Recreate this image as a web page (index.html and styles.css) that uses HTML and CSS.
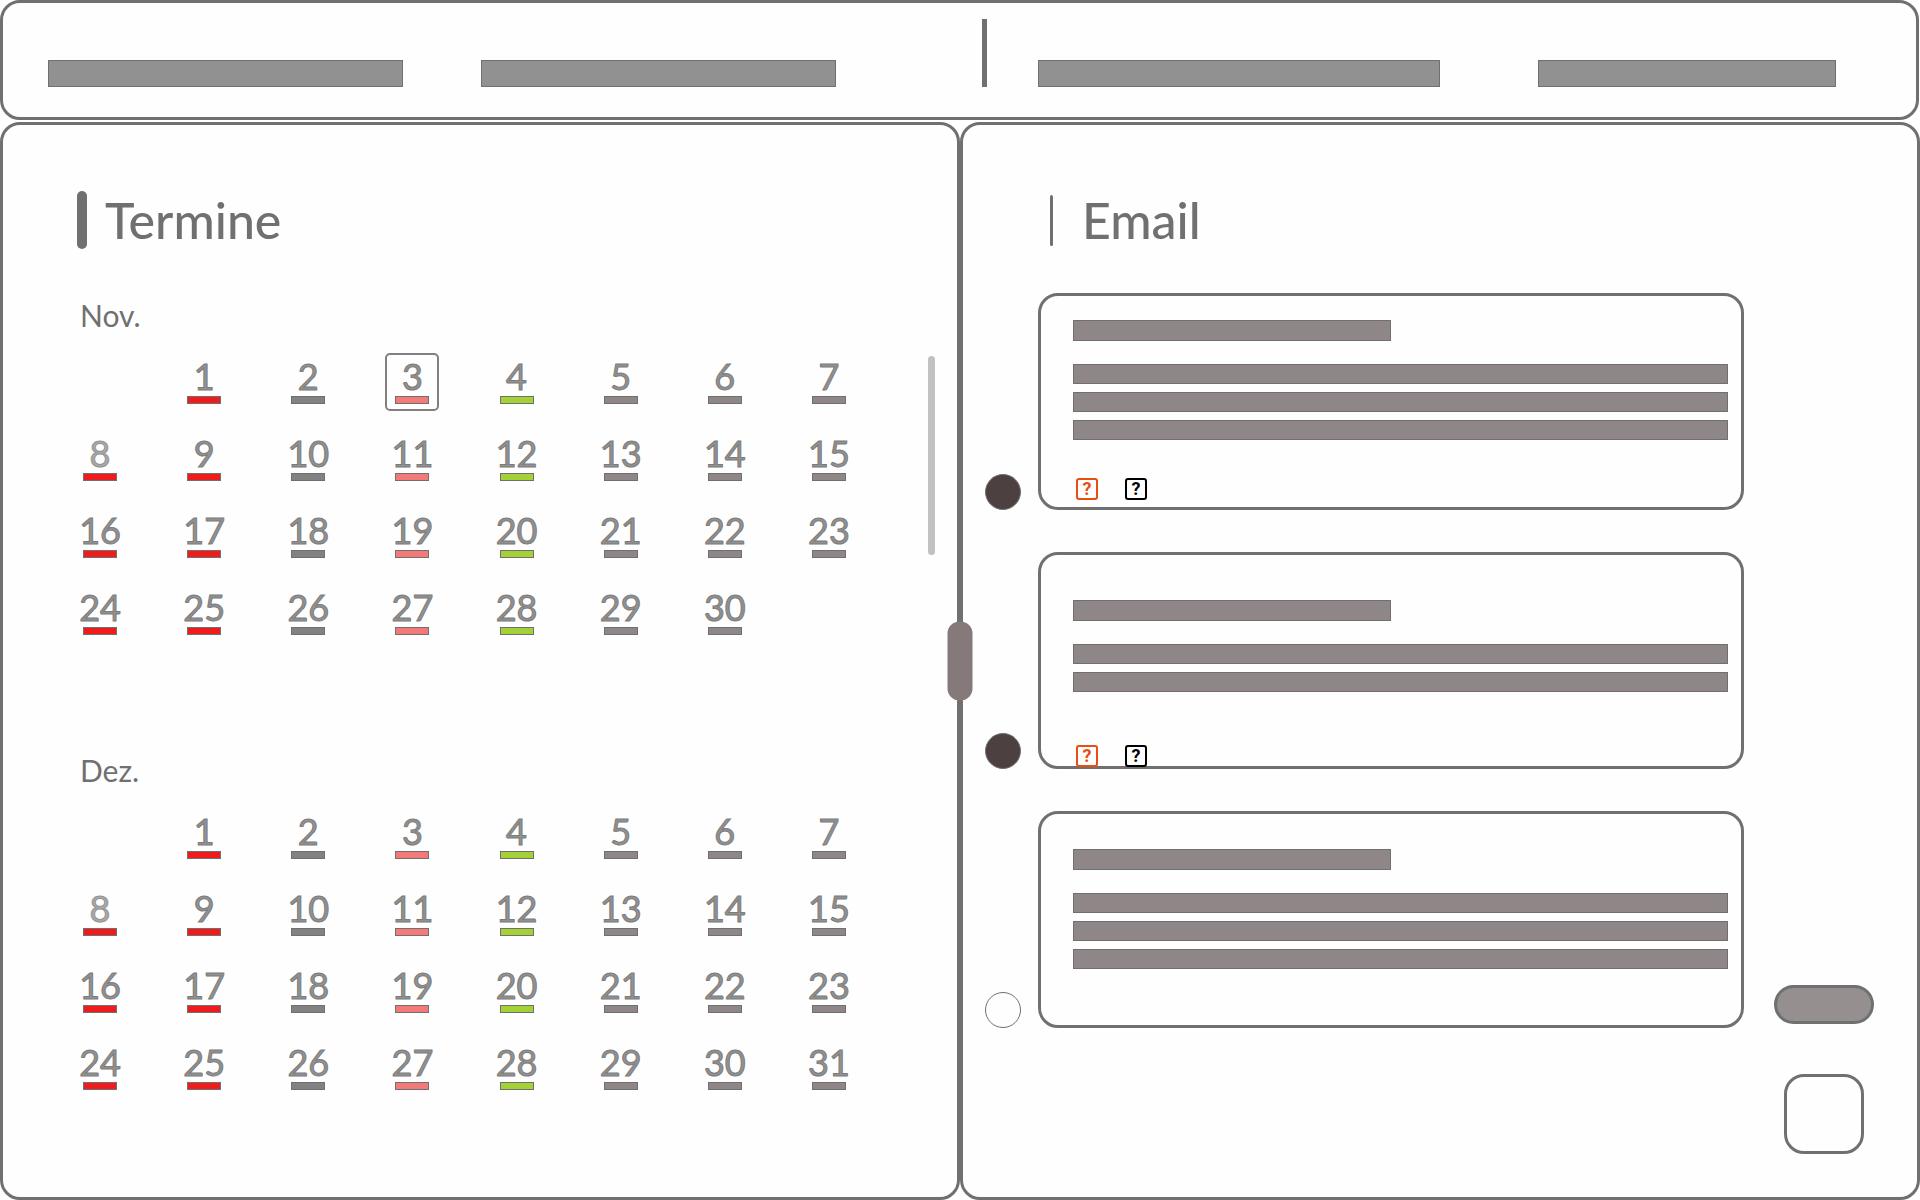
FILE: index.html
```html
<!DOCTYPE html>
<html lang="de">
<head>
<meta charset="utf-8">
<meta name="viewport" content="width=device-width, initial-scale=1">
<title>Termine und Email</title>
<link rel="stylesheet" href="styles.css">
</head>
<body>
<header class="topbar">
  <nav class="topbar-nav" aria-label="Navigation">
    <a class="nav-link nav-day" href="#" aria-label="Tag"></a>
    <a class="nav-link nav-week" href="#" aria-label="Woche"></a>
    <span class="nav-divider"></span>
    <a class="nav-link nav-inbox" href="#" aria-label="Posteingang"></a>
    <a class="nav-link nav-account" href="#" aria-label="Konto"></a>
  </nav>
</header>

<main class="workspace">
  <section class="panel calendar-panel">
    <h1 class="panel-title calendar-title">Termine</h1>
    <div class="calendar-body">
      <div class="months">
        <section class="month">
          <h2 class="month-name">Nov.</h2>
          <div class="days">
            <button class="day">1</button><button class="day">2</button><button class="day selected">3</button><button class="day">4</button><button class="day">5</button><button class="day">6</button><button class="day">7</button>
            <button class="day muted">8</button><button class="day">9</button><button class="day">10</button><button class="day">11</button><button class="day">12</button><button class="day">13</button><button class="day">14</button><button class="day">15</button>
            <button class="day">16</button><button class="day">17</button><button class="day">18</button><button class="day">19</button><button class="day">20</button><button class="day">21</button><button class="day">22</button><button class="day">23</button>
            <button class="day">24</button><button class="day">25</button><button class="day">26</button><button class="day">27</button><button class="day">28</button><button class="day">29</button><button class="day">30</button>
          </div>
        </section>
        <section class="month">
          <h2 class="month-name">Dez.</h2>
          <div class="days">
            <button class="day">1</button><button class="day">2</button><button class="day">3</button><button class="day">4</button><button class="day">5</button><button class="day">6</button><button class="day">7</button>
            <button class="day muted">8</button><button class="day">9</button><button class="day">10</button><button class="day">11</button><button class="day">12</button><button class="day">13</button><button class="day">14</button><button class="day">15</button>
            <button class="day">16</button><button class="day">17</button><button class="day">18</button><button class="day">19</button><button class="day">20</button><button class="day">21</button><button class="day">22</button><button class="day">23</button>
            <button class="day">24</button><button class="day">25</button><button class="day">26</button><button class="day">27</button><button class="day">28</button><button class="day">29</button><button class="day">30</button><button class="day">31</button>
          </div>
        </section>
      </div>
      <div class="scroll-thumb"></div>
    </div>
  </section>

  <section class="panel mail-panel">
    <h1 class="panel-title mail-title">Email</h1>
    <div class="mail-body">
      <div class="mail-list">
        <div class="mail-row">
          <input class="mail-check" type="checkbox" aria-label="Nachricht 1 auswählen" checked>
          <article class="mail-card">
            <div class="line subject"></div>
            <div class="line"></div>
            <div class="line"></div>
            <div class="line"></div>
            <div class="mail-actions">
              <button class="mail-action urgent">?</button>
              <button class="mail-action">?</button>
            </div>
          </article>
        </div>
        <div class="mail-row">
          <input class="mail-check" type="checkbox" aria-label="Nachricht 2 auswählen" checked>
          <article class="mail-card short">
            <div class="line subject"></div>
            <div class="line"></div>
            <div class="line"></div>
            <div class="mail-actions">
              <button class="mail-action urgent">?</button>
              <button class="mail-action">?</button>
            </div>
          </article>
        </div>
        <div class="mail-row">
          <input class="mail-check" type="checkbox" aria-label="Nachricht 3 auswählen">
          <article class="mail-card plain">
            <div class="line subject"></div>
            <div class="line"></div>
            <div class="line"></div>
            <div class="line"></div>
          </article>
        </div>
      </div>
      <div class="mail-tools">
        <button class="tool-pill" aria-label="Senden"></button>
        <button class="tool-square" aria-label="Neue Email"></button>
      </div>
    </div>
  </section>

  <div class="splitter-handle"></div>
</main>
</body>
</html>
```
FILE: styles.css
```css
:root {
  --line: #707070;
  --surface: #fefefe;
  --bar: #8f8787;
}

* {
  box-sizing: border-box;
}

body {
  margin: 0;
  min-height: 100vh;
  display: flex;
  flex-direction: column;
  gap: 2px;
  background: #fff;
  color: var(--line);
  font-family: Lato, "Liberation Sans", sans-serif;
}

h1,
h2 {
  margin: 0;
  font-weight: 400;
}

button {
  padding: 0;
  background: none;
  color: inherit;
  font-family: inherit;
  cursor: pointer;
}

/* Top bar */

.topbar {
  margin-right: 1px;
  padding: 16px 80px 30px 45px;
  border: 3px solid var(--line);
  border-radius: 20px;
  background: var(--surface);
}

.topbar-nav {
  display: flex;
  align-items: flex-end;
}

.nav-link {
  height: 27px;
  border: 1px solid var(--line);
  background: #919191;
}

.nav-day {
  flex: 355 1 0;
}

.nav-week {
  flex: 355 1 0;
  margin-left: 78px;
}

.nav-divider {
  width: 5px;
  height: 68px;
  margin-left: 146px;
  background: var(--line);
}

.nav-inbox {
  flex: 402 1 0;
  margin-left: 51px;
}

.nav-account {
  flex: 298 1 0;
  margin-left: 98px;
}

/* Panels */

.workspace {
  position: relative;
  flex: 1;
  display: grid;
  grid-template-columns: 1fr 1fr;
}

.panel {
  display: flex;
  flex-direction: column;
  gap: 47px;
  padding-top: 65px;
  border: 3px solid var(--line);
  border-radius: 20px;
  background: var(--surface);
}

.panel-title {
  display: flex;
  align-items: center;
  font-family: Lato, "Lato Medium", "Liberation Sans", sans-serif;
  font-size: 50px;
  font-weight: 500;
  line-height: 60px;
}

.panel-title::before {
  content: "";
  background: var(--line);
}

.calendar-title {
  gap: 18px;
  padding-left: 74px;
}

.calendar-title::before {
  width: 10px;
  height: 58px;
  border-radius: 5px;
}

.mail-title {
  gap: 29px;
  padding-left: 87px;
}

.mail-title::before {
  width: 3px;
  height: 51px;
  border-radius: 2px;
}

.splitter-handle {
  position: absolute;
  top: 50%;
  left: 50%;
  width: 25px;
  height: 79px;
  border-radius: 12px;
  background: #857979;
  transform: translate(-50%, -50%);
}

/* Calendar */

.calendar-body {
  display: flex;
  gap: 47px;
  padding: 0 22px 40px 45px;
}

.months {
  flex: 1;
  display: flex;
  flex-direction: column;
  gap: 110px;
}

.month-name {
  margin-bottom: 20px;
  padding-left: 32px;
  font-size: 30px;
  line-height: 36px;
}

.days {
  display: grid;
  grid-template-columns: repeat(8, 1fr);
  row-gap: 19px;
  justify-items: center;
}

.day {
  display: flex;
  flex-direction: column;
  align-items: center;
  width: 54px;
  height: 58px;
  padding-top: 1px;
  border: 2px solid transparent;
  border-radius: 5px;
  color: #919191;
  font-size: 36px;
  line-height: 40px;
  -webkit-text-stroke: 1px #7c7c7c;
}

.day:first-child {
  grid-column-start: 2;
}

.day.selected {
  border-color: #808080;
}

.day.muted {
  color: #a8a8a8;
  -webkit-text-stroke-color: #949494;
}

.day::after {
  content: "";
  width: 32px;
  height: 6px;
  border: 1px solid var(--line);
  background: var(--bar);
}

.day:nth-child(8n)::after,
.day:nth-child(8n + 1)::after {
  background: #ee1c1c;
}

.day:nth-child(8n + 2)::after {
  background: #828282;
}

.day:nth-child(8n + 3)::after {
  background: #f47a7a;
}

.day:nth-child(8n + 4)::after {
  background: #a4d136;
}

.scroll-thumb {
  width: 7px;
  height: 199px;
  margin-top: 59px;
  border-radius: 4px;
  background: #c1c1c1;
}

/* Mail */

.mail-panel {
  gap: 43px;
}

.mail-body {
  flex: 1;
  display: flex;
  gap: 30px;
  padding: 0 43px 43px 22px;
}

.mail-list {
  flex: 1;
  display: flex;
  flex-direction: column;
  gap: 42px;
}

.mail-row {
  display: flex;
  align-items: flex-end;
  gap: 17px;
}

.mail-check {
  appearance: none;
  width: 36px;
  height: 36px;
  margin: 0;
  border: 1px solid var(--line);
  border-radius: 50%;
}

.mail-check:checked {
  background: #4d4040;
}

.mail-card {
  flex: 1;
  display: flex;
  flex-direction: column;
  gap: 8px;
  min-height: 217px;
  padding: 24px 13px 0 32px;
  border: 3px solid var(--line);
  border-radius: 20px;
}

.line {
  flex-shrink: 0;
  height: 20px;
  border: 1px solid var(--line);
  background: var(--bar);
}

.subject {
  width: 318px;
  height: 21px;
  margin-bottom: 15px;
}

.mail-actions {
  display: flex;
  gap: 27px;
  margin-top: 30px;
  padding-left: 3px;
}

.mail-action {
  width: 22px;
  height: 22px;
  border: 2px solid currentColor;
  border-radius: 3px;
  color: #000;
  font-family: Roboto, "Liberation Sans", sans-serif;
  font-size: 18px;
  font-weight: 700;
  line-height: 18px;
}

.urgent {
  color: #e84e10;
}

/* The action row of a two-line message reaches the card's lower edge. */
.short {
  height: 217px;
  padding-top: 45px;
}

.short .mail-actions {
  margin-top: 45px;
}

.plain {
  padding-top: 35px;
}

.mail-tools {
  align-self: flex-end;
  display: flex;
  flex-direction: column;
  align-items: center;
  gap: 50px;
}

.tool-pill {
  width: 100px;
  height: 39px;
  border: 3px solid var(--line);
  border-radius: 20px;
  background: #958f8f;
}

.tool-square {
  width: 80px;
  height: 80px;
  border: 3px solid var(--line);
  border-radius: 20px;
}
```
